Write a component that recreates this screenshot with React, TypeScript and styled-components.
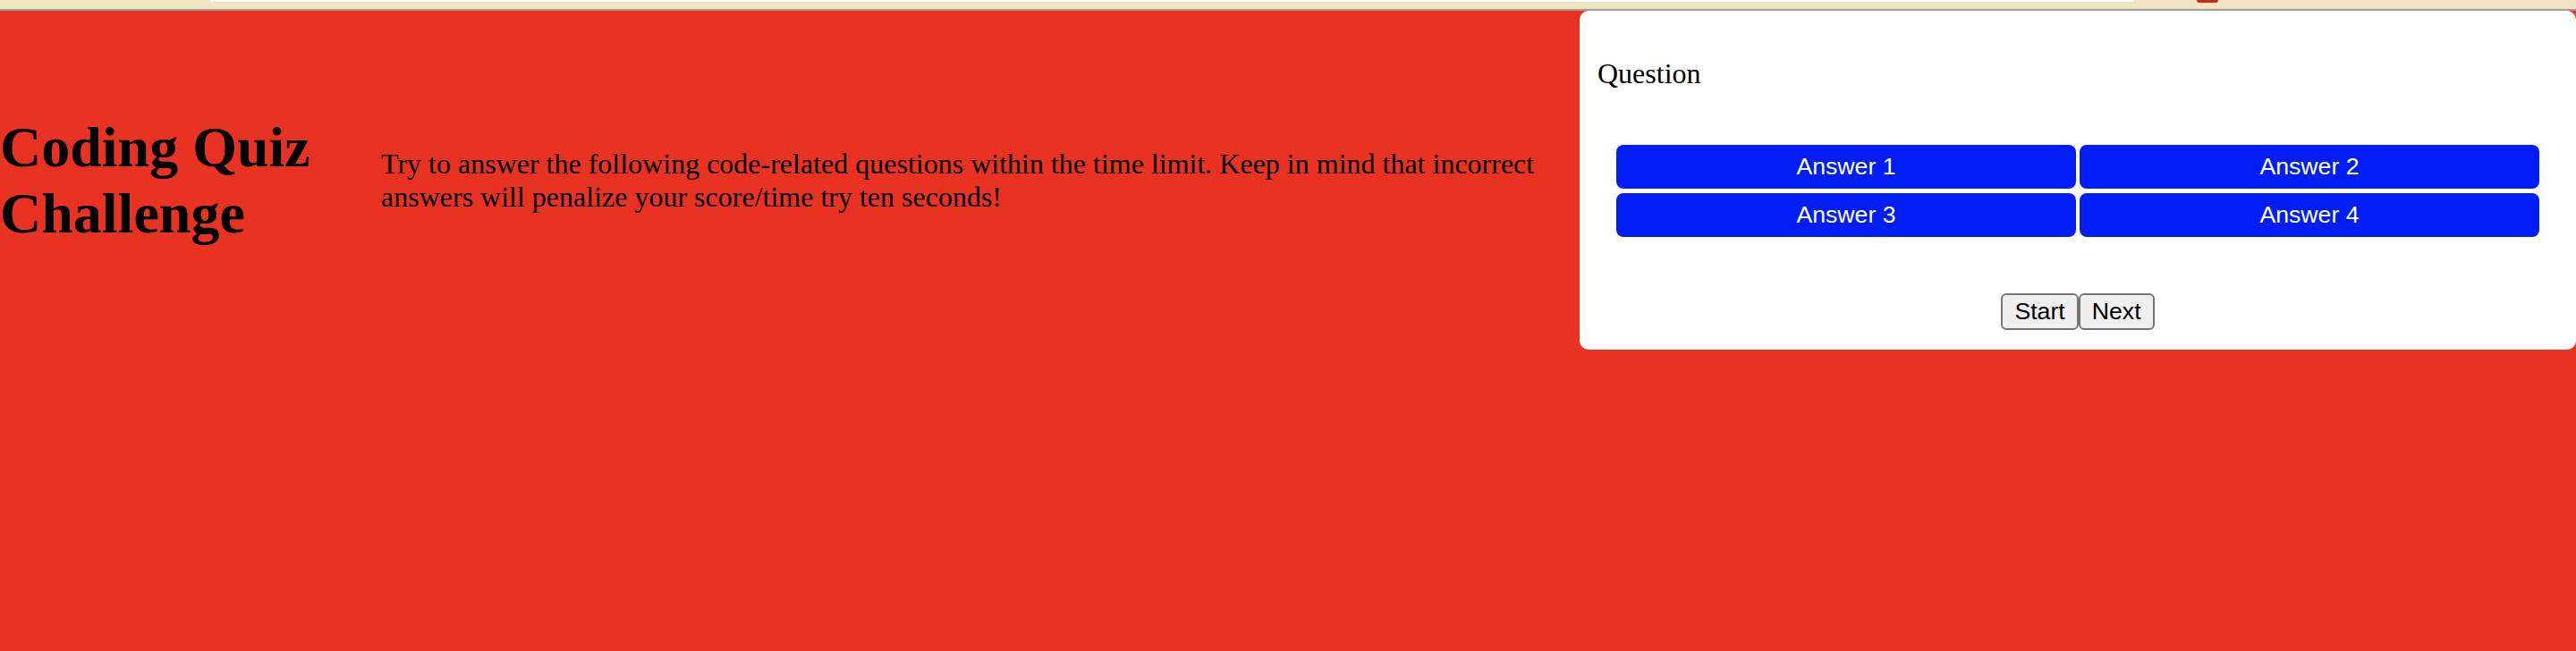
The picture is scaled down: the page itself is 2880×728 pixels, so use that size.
import React from 'react';
import styled, { createGlobalStyle } from 'styled-components';

const GlobalStyle = createGlobalStyle`
  html, body {
    margin: 0;
    padding: 0;
    background: #e83323;
    font-family: "Liberation Serif", "Times New Roman", serif;
    color: #000;
  }
`

const BrowserStrip = styled.div`
  height: 10px;
  background: #efe5c1;
  border-bottom: 2px solid #9f9e9a;
  display: flex;
  align-items: flex-start;
  padding-left: 235px;
  gap: 70px;
`
const UrlEdge = styled.div`
  width: 2151px;
  height: 2px;
  background: #fff;
  border-radius: 0 0 6px 6px;
`
const TabMark = styled.div`
  width: 24px;
  height: 3px;
  background: #c42a1f;
  border-radius: 0 0 4px 4px;
`

const Header = styled.header`
  display: flex;
  align-items: center;
`
const Title = styled.h1`
  flex: 0 0 426px;
  margin: 43px 0;
  font-size: 64px;
  font-weight: bold;
`
const Intro = styled.p`
  flex: 1;
  margin: 32px 0;
  font-size: 32px;
`

const QuizCard = styled.section`
  flex: 0 0 1114px;
  box-sizing: border-box;
  background: #fff;
  border-radius: 10px;
  padding: 20px 20px 22px;
`
const QuestionText = styled.p`
  margin: 32px 0;
  font-size: 32px;
`
const AnswerGrid = styled.div`
  width: 1032px;
  margin: 61px auto 0;
  display: grid;
  grid-template-columns: 1fr 1fr;
  column-gap: 4px;
  row-gap: 5px;
`
const AnswerButton = styled.button`
  height: 49px;
  border: none;
  border-radius: 8px;
  background: #001df6;
  color: #fff;
  font-family: "Liberation Sans", Arial, sans-serif;
  font-size: 26.67px;
  padding: 0;
`
const Controls = styled.div`
  margin-top: 63px;
  text-align: center;
  font-size: 0;
`
const ControlButton = styled.button`
  height: 41px;
  padding: 0 13px;
  background: #efefef;
  border: 2px solid #767676;
  border-radius: 6px;
  color: #000;
  font-family: "Liberation Sans", Arial, sans-serif;
  font-size: 26.67px;
`

const answers = ['Answer 1', 'Answer 2', 'Answer 3', 'Answer 4'];

export default function App() {
  return (
    <>
      <GlobalStyle />
      <BrowserStrip>
        <UrlEdge />
        <TabMark />
      </BrowserStrip>
      <Header>
        <Title>Coding Quiz Challenge</Title>
        <Intro>
          Try to answer the following code-related questions within the time limit. Keep in mind that
          incorrect answers will penalize your score/time try ten seconds!
        </Intro>
        <QuizCard>
          <QuestionText>Question</QuestionText>
          <AnswerGrid>
            {answers.map((a) => (
              <AnswerButton key={a}>{a}</AnswerButton>
            ))}
          </AnswerGrid>
          <Controls>
            <ControlButton>Start</ControlButton>
            <ControlButton>Next</ControlButton>
          </Controls>
        </QuizCard>
      </Header>
    </>
  )
}
